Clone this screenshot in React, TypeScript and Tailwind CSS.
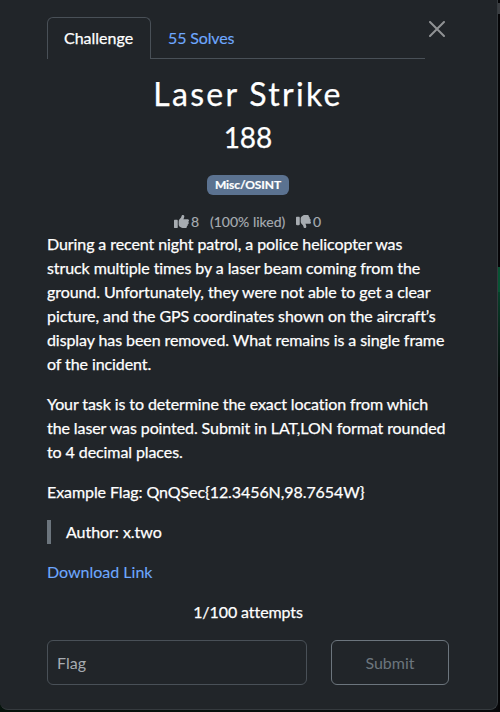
import { FaThumbsUp, FaThumbsDown } from "react-icons/fa6";

const tags = ["Misc/OSINT"];

function Tabs() {
  return (
    <ul className="flex h-[42px] w-[378px] border-b border-[#495057]">
      <li className="-mb-px h-[42px] w-[104px] rounded-t-md border border-b-0 border-[#495057] bg-[#212529] px-4 py-2 text-white [-webkit-text-stroke:0.25px]">
        Challenge
      </li>
      <li className="px-[17px] py-[9px] tracking-[-0.14px] text-[#6ea8fe] [-webkit-text-stroke:0.15px]">55 Solves</li>
    </ul>
  );
}

function Votes() {
  return (
    <div className="flex h-6 items-center pl-[127px] text-[14px] text-[#a7acb1] [-webkit-text-stroke:0.15px]">
      <FaThumbsUp className="-mt-px size-[15px]" strokeWidth="0" />
      <span className="ml-[2px] w-[19px]">8</span>
      <span className="w-[86px] whitespace-nowrap">(100% liked)</span>
      <FaThumbsDown className="-mt-px size-[15px]" strokeWidth="0" />
      <span className="ml-[2px]">0</span>
    </div>
  );
}

export default function App() {
  return (
    <div className="h-[712px] w-[500px] overflow-hidden bg-gradient-to-r from-[#06130c] via-[#07100d] to-[#08080b] font-['Lato',sans-serif] text-base leading-6 text-white [font-variant-ligatures:none]">
      <div className="flex">
        <main className="relative h-[710px] w-[498px] shrink-0 rounded-b-lg border-r border-b border-[#353a3e] bg-[#212529] pl-[47px] pt-[17px]">
          <Tabs />
          <button aria-label="Close" className="absolute left-[429px] top-[21px] size-4 text-[#909294]">
            <svg viewBox="0 0 16 16" fill="none" stroke="currentColor" strokeWidth="2" strokeLinecap="round" className="size-4">
              <path d="M1 1 15 15M15 1 1 15" />
            </svg>
          </button>
          <div className="w-[402px]">
            <h2 className="mt-4 text-center text-[32px] leading-[38px] tracking-[2.3px] [-webkit-text-stroke:0.25px]">Laser Strike</h2>
            <h3 className="mt-[7px] text-center text-[28px] leading-[34px] [-webkit-text-stroke:0.25px]">188</h3>
            <div className="mt-[21px] flex h-5 justify-center">
              {tags.map((tag) => (
                <span key={tag} className="h-5 w-[82px] rounded-md bg-[#5b7290] text-center text-[12px] font-bold leading-5 tracking-[-0.1px] [-webkit-text-stroke:0.2px]">{tag}</span>
              ))}
            </div>
            <div className="mt-[15px] h-[22px]">
              <Votes />
            </div>
            <div className="flex flex-col gap-4 whitespace-nowrap [-webkit-text-stroke:0.25px]">
              <p className="tracking-[-0.085px]">
                During a recent night patrol, a police helicopter was<br />
                struck multiple times by a laser beam coming from the<br />
                ground. Unfortunately, they were not able to get a clear<br />
                picture, and the GPS coordinates shown on the aircraft’s<br />
                display has been removed. What remains is a single frame<br />
                of the incident.
              </p>
              <p className="tracking-[-0.09px]">
                Your task is to determine the exact location from which<br />
                the laser was pointed. Submit in LAT,LON format rounded<br />
                to 4 decimal places.
              </p>
              <p className="tracking-[-0.08px]">Example Flag: QnQSec&#123;12.3456N,98.7654W&#125;</p>
              <blockquote className="border-l-4 border-[#6c757d] pl-[15px] tracking-[-0.04px]">Author: x.two</blockquote>
              <a className="text-[#6ea8fe] [-webkit-text-stroke:0.1px]">Download Link</a>
              <p className="text-center tracking-[-0.08px]">1/100 attempts</p>
            </div>
            <div className="mt-4 flex gap-6">
              <input
                placeholder="Flag"
                className="h-[45px] w-[260px] rounded-md border border-[#495057] px-[9px] placeholder:text-[#a7acb1]"
              />
              <button className="h-[45px] w-[118px] rounded-md border border-[#6c757d] text-[#6c757d]">Submit</button>
            </div>
          </div>
        </main>
        <aside className="h-[710px] w-[2px] bg-[#050507] pt-[3px]">
          <div className="h-[11px] bg-[#393c40]" />
          <div className="mt-[253px] h-[25px] bg-[#075333]" />
          <div className="h-[85px] bg-gradient-to-b from-[#06402a] to-[#030908]" />
        </aside>
      </div>
    </div>
  );
}
